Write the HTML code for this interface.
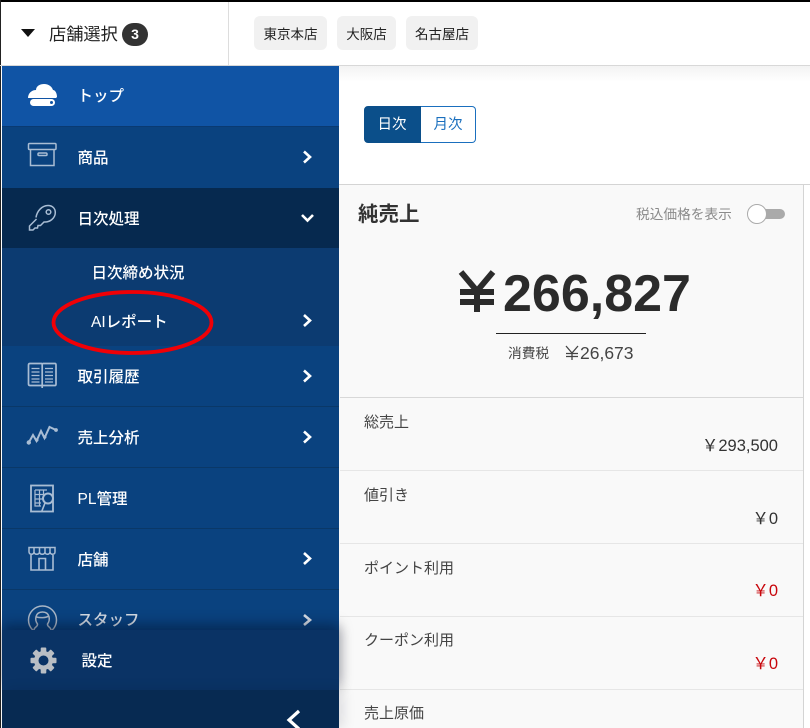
<!DOCTYPE html>
<html lang="ja"><head><meta charset="utf-8"><title>店舗</title>
<style>
*{box-sizing:border-box}
html,body{margin:0;padding:0;background:#fff}
body{position:relative;width:810px;height:728px;overflow:hidden;font-family:"Liberation Sans","Noto Sans CJK JP",sans-serif;color:#333}
.a{position:absolute;white-space:nowrap}
.bg{position:absolute;left:2px;width:337px}
.nav{position:absolute;left:77.500px;color:#fff;font-size:15.500px;font-weight:500;line-height:20px;white-space:nowrap}
.ic{position:absolute;left:0;top:0}
.tag{position:absolute;top:16px;height:34px;background:#f1f1f1;border-radius:6px;font-size:13.500px;line-height:37px;text-align:center;color:#222}
.lab{position:absolute;left:364px;font-size:15px;line-height:20px;color:#444;white-space:nowrap}
.val{position:absolute;right:32px;font-size:16.500px;line-height:22px;color:#333;white-space:nowrap}
.red{color:#c8060c}
.ln{position:absolute;left:340px;width:463px;height:1px;background:#e6e6e6}
.yen{font-family:"Noto Sans CJK JP",sans-serif}
</style></head><body>
<!-- header -->
<div class="a" style="left:0;top:0;width:810px;height:2px;background:#000"></div>
<div class="a" style="left:0;top:0;width:1px;height:728px;background:#222"></div>
<div class="a" style="left:228px;top:2px;width:1px;height:63px;background:#ddd"></div>
<div class="a" style="left:0;top:65px;width:810px;height:1px;background:#d8d8d8"></div>
<div class="a" style="left:21px;top:29px;width:0;height:0;border-left:7px solid transparent;border-right:7px solid transparent;border-top:8px solid #111"></div>
<div class="a" style="left:49px;top:22px;font-size:17.200px;line-height:24px;color:#222">店舗選択</div>
<div class="a" style="left:122px;top:23px;width:26px;height:23px;border-radius:12px;background:#333;color:#fff;font-size:14px;font-weight:bold;line-height:23px;text-align:center">3</div>
<div class="tag" style="left:254px;width:73px">東京本店</div>
<div class="tag" style="left:337px;width:59px">大阪店</div>
<div class="tag" style="left:406px;width:72px">名古屋店</div>

<!-- main -->
<div class="a" style="left:339px;top:66px;width:471px;height:16px;background:linear-gradient(#f3f3f3,#fff)"></div>
<div class="a" style="left:364px;top:106px;width:57px;height:37px;background:#0b4f8a;border:1px solid #0b4f8a;border-radius:4px 0 0 4px;color:#fff;font-size:14.500px;line-height:37px;text-align:center;padding-right:1px">日次</div>
<div class="a" style="left:421px;top:106px;width:55px;height:37px;background:#fff;border:1px solid #1a6fbe;border-left:0;border-radius:0 4px 4px 0;color:#1a6fbe;font-size:14.500px;line-height:37px;text-align:center">月次</div>
<div class="a" style="left:339px;top:185px;width:464px;height:543px;background:#f9f9f9"></div>
<div class="a" style="left:339px;top:184px;width:471px;height:1px;background:#d4d4d4"></div>
<div class="a" style="left:803px;top:184px;width:1px;height:544px;background:#d4d4d4"></div>
<div class="a" style="left:358px;top:201px;font-size:20.500px;font-weight:bold;line-height:28px;color:#333">純売上</div>
<div class="a" style="left:636px;top:205px;font-size:13.700px;line-height:20px;color:#8a8a8a">税込価格を表示</div>
<div class="a" style="left:756px;top:209px;width:29px;height:10px;border-radius:5px;background:#aaa"></div>
<div class="a" style="left:747px;top:204px;width:20px;height:20px;border-radius:50%;background:#fff;border:1px solid #aaa"></div>

<svg class="a" style="left:458px;top:270px" width="38" height="44" viewBox="0 0 38 44"><path d="M3 2L19 21L35 2M19 21V42M2 22H36M2 32H36" fill="none" stroke="#2b2b2b" stroke-width="6"/></svg>
<div class="a" style="left:503px;top:264px;font-size:52px;font-weight:bold;line-height:60px;color:#2b2b2b">266,827</div>
<div class="a" style="left:496px;top:333px;width:150px;height:1px;background:#222"></div>
<div class="a" style="left:508px;top:345px;font-size:13.700px;line-height:18px;color:#444">消費税</div>
<svg class="a" style="left:565px;top:345px" width="14" height="15" viewBox="0 0 14 15"><path d="M1 1L7 8L13 1M7 8V15M1 8.500H13M1 11.500H13" fill="none" stroke="#444" stroke-width="1.300"/></svg>
<div class="a" style="left:580px;top:342px;font-size:17.500px;line-height:22px;color:#444">26,673</div>

<div class="ln" style="top:397px;background:#d8d8d8"></div>
<div class="lab" style="top:413px">総売上</div>
<div class="val" style="top:433px"><span class="yen">￥</span>293,500</div>
<div class="ln" style="top:470px"></div>
<div class="lab" style="top:486px">値引き</div>
<div class="val" style="top:506px"><span class="yen">￥</span>0</div>
<div class="ln" style="top:543px"></div>
<div class="lab" style="top:559px">ポイント利用</div>
<div class="val red" style="top:578px"><span class="yen">￥</span>0</div>
<div class="ln" style="top:616px"></div>
<div class="lab" style="top:631px">クーポン利用</div>
<div class="val red" style="top:651px"><span class="yen">￥</span>0</div>
<div class="ln" style="top:689px"></div>
<div class="lab" style="top:704px">売上原価</div>

<!-- sidebar backgrounds -->
<div class="bg" style="top:66px;height:60px;background:#1054a5"></div>
<div class="bg" style="top:126px;height:1px;background:#0a3a72"></div>
<div class="bg" style="top:127px;height:61px;background:#0a427f"></div>
<div class="bg" style="top:188px;height:60px;background:#06294f"></div>
<div class="bg" style="top:248px;height:98px;background:#0c3b71"></div>
<div class="bg" style="top:346px;height:284px;background:#0a427f"></div>
<div class="bg" style="top:406px;height:1px;background:#0a3868"></div>
<div class="bg" style="top:467px;height:1px;background:#0a3868"></div>
<div class="bg" style="top:528px;height:1px;background:#0a3868"></div>
<div class="bg" style="top:589px;height:1px;background:#0a3868"></div>

<!-- icons -->
<svg class="ic" width="339" height="728" viewBox="0 0 339 728" style="z-index:1">
<!-- cloud -->
<path d="M28 98C28 93 32 90 36 90C36 86 40 84 44 84C49 84 52 87 53 90C55 90 57 93 57 97L56 98Z" fill="#fff"/>
<rect x="30" y="99" width="25" height="7" rx="3.500" fill="#fff"/><circle cx="51.500" cy="102.500" r="1.500" fill="#1054a5"/>
<g fill="none" stroke="#a9bdd4" stroke-width="1.500">
<!-- box -->
<rect x="28.500" y="143.500" width="27.500" height="6" rx="1"/><path d="M30.500 149.500V165.500H54V149.500"/><rect x="38" y="153" width="9" height="2.500" rx="1"/>
<!-- key -->
<path d="M36 217.500C37 211 42 205.500 48 205.500C52.500 205.500 55.300 208.500 55.300 212.500C55.300 218 50 222.500 44 222L40.500 225.500H38L37.500 228H35L33 230H29.500V226L36.500 219"/><circle cx="48.500" cy="212" r="2.300"/>
<!-- book -->
<path d="M30 363.500H41.500C42 364 42.500 364 43 363.500H55C55.800 363.500 56 364 56 365V384C56 385 55.800 385.500 55 385.500H30C29 385.500 28.500 385 28.500 384V365C28.500 364 29 363.500 30 363.500ZM42.200 364V388" stroke-width="1.700"/>
<path d="M31.500 368.500H39.500M31.500 372H39.500M31.500 375.500H39.500M31.500 379H39.500M31.500 382H39.500M45 368.500H53M45 372H53M45 375.500H53M45 379H53M45 382H53" stroke-width="1.300"/>
<!-- doc -->
<rect x="31" y="485.500" width="22" height="26" stroke-width="1.800"/><path d="M35 490H47M35 490V506H41M35 494.500H45M35 499H43M35 503H41M39.500 490V506M43.500 490V495" stroke-width="1.200"/><circle cx="48" cy="498.500" r="5" stroke-width="2" fill="#0a427f"/><path d="M45 503L41.500 512" stroke-width="1.600"/>
<!-- shop -->
<path d="M29 547.500H55V552C55 555 50.500 555 50 552C49.500 555 45 555 45 552C44.500 555 40 555 39.500 552C39 555 34.500 555 34 552C33.500 555 29.500 555 29 552ZM34 547.500V552M39.500 547.500V552M45 547.500V552M50 547.500V552"/><path d="M31 555V570H53V555M39 570V558.500H45.500V570" stroke-width="1.600"/>
</g>
<!-- chart -->
<path d="M28.500 443L33 435L36.500 441L41 431L44.500 438L49.500 427L56 430" fill="none" stroke="#a9bdd4" stroke-width="2"/>
<g fill="#a9bdd4"><circle cx="28.800" cy="442.500" r="2.200"/><circle cx="36.800" cy="440" r="1.700"/><circle cx="44.800" cy="437" r="1.700"/><circle cx="56" cy="430" r="1.900"/></g>
<!-- chevrons -->
<g fill="none" stroke="#fff" stroke-width="2.600">
<path d="M304 151.500L310 157L304 162.500"/>
<path d="M302 215L307.500 220.500L313 215"/>
<path d="M304 315L310 320.500L304 326"/>
<path d="M304 370.500L310 376L304 381.500"/>
<path d="M304 431.500L310 437L304 442.500"/>
<path d="M304 553L310 558.500L304 564"/>
</g>
</svg>

<!-- nav text -->
<div class="nav" style="top:87px;z-index:2">トップ</div>
<div class="nav" style="top:149px;z-index:2">商品</div>
<div class="nav" style="top:210px;z-index:2">日次処理</div>
<div class="nav" style="left:91.500px;top:264px;z-index:2">日次締め状況</div>
<div class="nav" style="left:91px;top:313px;z-index:2">AIレポート</div>
<div class="nav" style="top:368px;z-index:2">取引履歴</div>
<div class="nav" style="top:429px;z-index:2">売上分析</div>
<div class="nav" style="top:490px;z-index:2">PL管理</div>
<div class="nav" style="top:551px;z-index:2">店舗</div>
<div class="nav" style="top:611px;z-index:2;color:#d4dbe4">スタッフ</div>

<!-- staff icon -->
<svg class="a" style="left:0;top:590px;z-index:2" width="339" height="60" viewBox="0 0 339 60">
<g fill="none" stroke="#a9b6c6" stroke-width="1.500">
<circle cx="42.500" cy="30" r="14"/>
<path d="M34 40C34 37 38 37 37.500 34C34.500 30 35 22 42.500 22C50 22 50.500 30 47.500 34C47 37 51 37 51 40M36.500 27C40 28 46 28 48.500 26"/>
</g>
<path d="M304 25L310 30L304 35" fill="none" stroke="#d4dbe4" stroke-width="2.600"/>
</svg>

<!-- settings panels -->
<div class="a" style="left:2px;top:630px;width:337px;height:60px;background:#0a3365;box-shadow:0 -6px 12px rgba(0,10,30,.35),4px 0 10px rgba(0,10,30,.1);z-index:3"></div>
<div class="a" style="left:2px;top:690px;width:337px;height:38px;background:#072a52;box-shadow:4px 0 12px rgba(0,10,30,.12);z-index:3"></div>
<svg class="a" style="left:0;top:630px;z-index:4" width="339" height="98" viewBox="0 0 339 98">
<g transform="translate(43.500,30.500)" fill="#b9bec4">
<g><rect x="-2.800" y="-13" width="5.600" height="26" rx="1"/><rect x="-2.800" y="-13" width="5.600" height="26" rx="1" transform="rotate(45)"/><rect x="-2.800" y="-13" width="5.600" height="26" rx="1" transform="rotate(90)"/><rect x="-2.800" y="-13" width="5.600" height="26" rx="1" transform="rotate(135)"/></g>
<circle r="9.500"/><circle r="5" fill="#0a3365"/>
</g>
<path d="M299 81L289 90L299 99" fill="none" stroke="#fff" stroke-width="3.200"/>
</svg>
<div class="nav" style="left:81.500px;top:652px;z-index:4">設定</div>

<!-- red ellipse -->
<svg class="a" style="left:0;top:250px;z-index:5" width="340" height="120" viewBox="0 0 340 120"><ellipse cx="132.500" cy="72.500" rx="79" ry="30.500" fill="none" stroke="#f00006" stroke-width="3.800"/></svg>
</body></html>
